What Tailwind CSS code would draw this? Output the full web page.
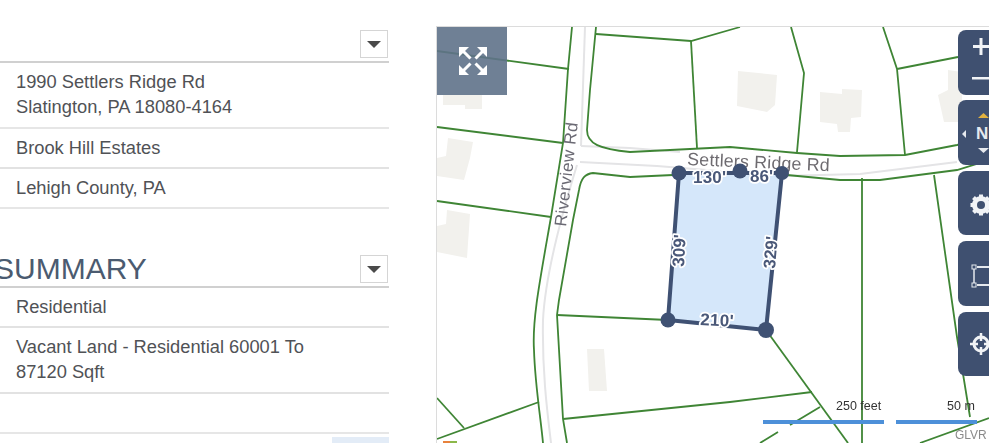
<!doctype html>
<html>
<head>
  <meta charset="UTF-8">
  <meta name="viewport" content="width=device-width, initial-scale=1.0">
  <script src="https://cdn.jsdelivr.net/npm/@tailwindcss/browser@4"></script>
</head>
<body class="bg-white">
<div class="flex h-[443px] w-[989px] overflow-hidden bg-white font-['Liberation_Sans',Arial,sans-serif]">

  <!-- left column -->
  <div class="w-[389px] shrink-0 text-[18.3px] leading-[25px] text-[#505256]">
    <div class="flex h-[63px] items-end justify-end border-b-2 border-[#d0d0d0] pr-px pb-[3px]">
      <button class="flex h-[28px] w-[28px] items-center justify-center border border-[#d5d5d5] bg-white">
        <svg width="14" height="7" viewBox="0 0 14 7"><path d="M0 0H14L7 7Z" fill="#4a4a4a"/></svg>
      </button>
    </div>
    <div class="border-b-2 border-[#e6e6e6] pt-[6px] pb-2 pl-4">1990 Settlers Ridge Rd<br>Slatington, PA 18080-4164</div>
    <div class="border-b-2 border-[#e2e2e2] pt-[6px] pb-[7px] pl-4">Brook Hill Estates</div>
    <div class="border-b-2 border-[#e6e6e6] pt-[6px] pb-[7px] pl-4">Lehigh County, PA</div>

    <div class="flex h-[79px] items-end justify-between border-b-2 border-[#d0d0d0] pr-px pb-[3px]">
      <h2 class="-mb-[3px] -ml-[6px] text-[30px] leading-[34px] text-[#4b5b70]">SUMMARY</h2>
      <button class="flex h-[28px] w-[28px] items-center justify-center border border-[#d5d5d5] bg-white">
        <svg width="14" height="7" viewBox="0 0 14 7"><path d="M0 0H14L7 7Z" fill="#4a4a4a"/></svg>
      </button>
    </div>
    <div class="border-b-2 border-[#e2e2e2] pt-[6px] pb-[7px] pl-4">Residential</div>
    <div class="border-b-2 border-[#e2e2e2] pt-[6px] pb-2 pl-4">Vacant Land - Residential 60001 To<br>87120 Sqft</div>
    <div class="h-[40px] border-b-2 border-[#e6e6e6]"></div>
    <div class="mt-[3px] ml-[332px] h-[10px] w-[57px] bg-[#e3ecf7]"></div>
  </div>

  <!-- map -->
  <div class="relative mt-[26px] ml-[47px] h-[417px] w-[553px] shrink-0 overflow-hidden border-t border-l border-[#dcdcdc]">
    <svg class="absolute -top-px -left-px blur-[0.4px]" width="553" height="417" viewBox="436 26 553 417">
      <!-- buildings -->
      <g fill="#f2f1ed">
        <path d="M443 95H482V109H465V105H443Z"/>
        <path d="M448 138L473 142L470 158L464 180L437 176V158L446 156Z"/>
        <path d="M447 210L470 214L467 258L437 252V226L446 224Z"/>
        <path d="M738 71L777 75L775 105L767 112L737 106Z"/>
        <path d="M820 92L842 94V89L862 90L861 117L851 118L850 132L838 132L837 124L820 122Z"/>
        <path d="M948 70L962 72V122L944 122L938 95L948 90Z"/>
        <path d="M587 349H604L607 391H589Z"/>
      </g>

      <!-- roads -->
      <g fill="none" stroke="#e4e4e6" stroke-width="2">
        <path d="M585 27L581 146"/>
        <path d="M581 146L630 148L680 152"/>
        <path d="M580 162L657 166L780 176L860 174L957 162"/>
        <path d="M577 165C560 220 545 280 543 320C542 370 547 410 551 443"/>
      </g>

      <!-- parcel lines -->
      <g fill="none" stroke="#3f8535" stroke-width="1.800">
        <path d="M437 51L569 69"/>
        <path d="M437 127L563 143"/>
        <path d="M437 201L551 217"/>
        <path d="M572 27L568 69L563 143L551 217C540 280 532 320 534 350C535 385 541 420 543 443"/>
        <path d="M596 27L590 90L587 130C587 144 600 149 630 152L730 147L797 153L840 156L905 155L957 145L989 138"/>
        <path d="M989 160L957 170L880 180H840L787 175"/>
        <path d="M673 175L630 177L593 173C585 174 581 178 579 190L573 220L559 300L557 315L563 419L567 443"/>
        <path d="M557 315L668 320"/>
        <path d="M563 419L730 402L812 392"/>
        <path d="M766 330L848 443"/>
        <path d="M820 407L790 425M778 432L760 443"/>
        <path d="M862 178V443"/>
        <path d="M934 175L957 337L964 380L970 417"/>
        <path d="M920 443L989 418"/>
        <path d="M437 398L464 428"/>
        <path d="M437 439L539 402"/>
        <path d="M596 34L691 41L740 27"/>
        <path d="M691 41L697 148"/>
        <path d="M791 27L804 73L797 152"/>
        <path d="M883 27L897 69L905 155"/>
        <path d="M897 69L958 57"/>
      </g>

      <!-- road names -->
      <text transform="translate(566 227) rotate(-83.500)" font-size="17" letter-spacing="0.4" fill="#6b6a74">Riverview Rd</text>
      <text transform="translate(687 165) rotate(2.500)" font-size="17.800" letter-spacing="0.2" fill="#6e6b70">Settlers Ridge Rd</text>

      <!-- selected lot -->
      <path d="M679 173L782 173L766 330L668 320Z" fill="#d5e7fa" stroke="#3f5173" stroke-width="4" stroke-linejoin="round"/>
      <g fill="#3f5173">
        <circle cx="679" cy="173" r="7.500"/>
        <circle cx="740" cy="171" r="7.500"/>
        <circle cx="782" cy="173" r="7"/>
        <circle cx="668" cy="320" r="7.500"/>
        <circle cx="766" cy="330" r="8"/>
      </g>
      <g font-size="17" fill="#4a5878" stroke="#ffffff" stroke-width="3.500" paint-order="stroke" stroke-linejoin="round" font-weight="bold">
        <text x="693" y="183" letter-spacing="0.2">130'</text>
        <text x="750" y="182">86'</text>
        <text transform="translate(684 267) rotate(-87)">309'</text>
        <text transform="translate(775 269) rotate(-85)">329'</text>
        <text transform="translate(700 325) rotate(3)" letter-spacing="0.3">210'</text>
      </g>

      <!-- scale -->
      <rect x="763" y="420" width="121" height="4" fill="#4d90d9"/>
      <rect x="896" y="420" width="81" height="4" fill="#4d90d9"/>
      <text x="836" y="410" font-size="12.500" fill="#333333">250 feet</text>
      <text x="947" y="410" font-size="12.500" fill="#333333">50 m</text>
      <text x="955" y="439" font-size="12" fill="#8a8a8a">GLVR</text>
      <rect x="443" y="441" width="7" height="2" fill="#e8823c"/>
      <rect x="450" y="441" width="7" height="2" fill="#8cb84a"/>
    </svg>

    <!-- expand button -->
    <button class="absolute top-0 -left-px flex h-[68px] w-[71px] items-center justify-center bg-[#5f7289]/90 pl-[3px]">
      <svg width="28" height="28" viewBox="0 0 28 28" fill="#ffffff" stroke="#ffffff">
        <path d="M0 0H10L0 10Z" stroke="none"/>
        <path d="M28 0H18L28 10Z" stroke="none"/>
        <path d="M0 28H10L0 18Z" stroke="none"/>
        <path d="M28 28H18L28 18Z" stroke="none"/>
        <path d="M3 3L11.500 11.500M25 3L16.500 11.500M3 25L11.500 16.500M25 25L16.500 16.500" stroke-width="3" fill="none"/>
      </svg>
    </button>

    <!-- tool buttons -->
    <div class="absolute top-[3px] left-[521px] flex w-[66px] flex-col">
      <div class="h-[65px] rounded-lg bg-[#3f5070]">
        <svg width="31" height="65" viewBox="0 0 31 65" fill="#f1f3f6">
          <rect x="21.500" y="8" width="3" height="17"/>
          <rect x="15" y="15" width="16" height="3"/>
          <rect x="14" y="47" width="17" height="2.500"/>
        </svg>
      </div>
      <div class="mt-[5px] h-[65px] rounded-lg bg-[#3f5070]">
        <svg width="31" height="65" viewBox="0 0 31 65">
          <path d="M20 18L25.500 13L31 18Z" fill="#e2b23f"/>
          <path d="M8 30V38L4 34Z" fill="#e6e9ee"/>
          <path d="M20 48H31L25.500 53Z" fill="#e6e9ee"/>
          <text x="18" y="39" font-size="17" font-weight="bold" fill="#e6e9ee">N</text>
        </svg>
      </div>
      <div class="mt-[6px] h-[64px] rounded-lg bg-[#3f5070]">
        <svg width="31" height="64" viewBox="0 0 31 64">
          <g transform="translate(23 34)">
            <circle r="6.500" fill="none" stroke="#f1f3f6" stroke-width="5"/>
            <path d="M0 -10.500V10.500M-10.500 0H10.500M-7.500 -7.500L7.500 7.500M-7.500 7.500L7.500 -7.500" stroke="#f1f3f6" stroke-width="4"/>
            <circle r="4" fill="#3f5070"/>
          </g>
        </svg>
      </div>
      <div class="mt-[6px] h-[65px] rounded-lg bg-[#3f5070]">
        <svg width="31" height="65" viewBox="0 0 31 65" fill="none" stroke="#e6e9ee">
          <rect x="14" y="24" width="4" height="4" stroke-width="1"/>
          <rect x="14" y="42" width="4" height="4" stroke-width="1"/>
          <path d="M16 28V42" stroke-width="1.500"/>
          <path d="M19 26H31M19 44H31" stroke-width="2"/>
        </svg>
      </div>
      <div class="mt-[6px] h-[64px] rounded-lg bg-[#3f5070]">
        <svg width="31" height="64" viewBox="0 0 31 64" fill="none" stroke="#f1f3f6">
          <g transform="translate(23 32)">
            <circle r="7" stroke-width="3"/>
            <path d="M0 -11V-3M0 3V11M-11 0H-3M3 0H11" stroke-width="2.500"/>
          </g>
        </svg>
      </div>
    </div>
  </div>

</div>
</body>
</html>
